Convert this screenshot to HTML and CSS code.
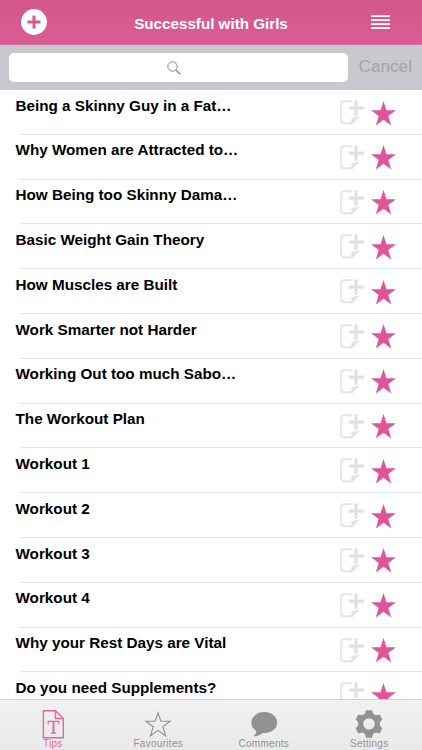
FILE: index.html
```
<!DOCTYPE html>
<html lang="en">
<head>
  <meta charset="UTF-8">
  <title>Successful with Girls</title>
  <meta name="viewport" content="width=device-width">
  <link rel="stylesheet" href="styles.css">
</head>
<body>
  <!-- shared row icons -->
  <svg class="sprite">
    <symbol id="note" viewBox="0 0 25 26">
      <path d="M12.5 1.2H4Q1.2 1.2 1.2 3.7V20.5Q1.2 23.2 4 23.2H12" fill="none" stroke="#e5e5eb" stroke-width="2"/>
      <path d="M19 16V17.4L12.2 24.4H11.4V18.6Q11.6 17.6 12.8 17.8Q16.5 18 19 16Z" fill="#e2e2e9"/>
      <path d="M16 1.8V14.4M10 8.1H22.8" fill="none" stroke="#e0e0e7" stroke-width="3.2" stroke-linecap="round"/>
    </symbol>
    <symbol id="star" viewBox="0 0 25 25">
      <path d="M12.5 0L15.4 9.3H25L17.3 15.1L20.2 24.5L12.5 18.8L4.8 24.5L7.7 15.1L0 9.3H9.6Z" fill="#e0559a"/>
    </symbol>
  </svg>

  <div class="app">
    <header class="navbar">
      <a href="#" class="add">
        <svg width="26" height="26" viewBox="0 0 26 26"><circle cx="13" cy="13" r="12.9" fill="#fff"/><path d="M13 6.5V19.5M6.5 13H19.5" stroke="#d5598f" stroke-width="3"/></svg>
      </a>
      <h1>Successful with Girls</h1>
      <a href="#" class="menu">
        <svg width="20" height="15" viewBox="0 0 20 15"><path d="M0 1.2H19M0 5.2H19M0 9.2H19M0 13.2H19" stroke="#fff" stroke-width="1.7"/></svg>
      </a>
    </header>

    <div class="search">
      <div class="field">
        <svg width="14" height="14" viewBox="0 0 14 14" fill="none" stroke="#888"><circle cx="5.5" cy="5.5" r="4.7"/><path d="M9 9L13.2 13.2" stroke-width="1.4"/></svg>
      </div>
      <a href="#" class="cancel">Cancel</a>
    </div>

    <ul class="tips">
      <li><span>Being a Skinny Guy in a Fat…</span><svg class="note"><use href="#note"/></svg><svg class="star"><use href="#star"/></svg></li>
      <li><span>Why Women are Attracted to…</span><svg class="note"><use href="#note"/></svg><svg class="star"><use href="#star"/></svg></li>
      <li><span>How Being too Skinny Dama…</span><svg class="note"><use href="#note"/></svg><svg class="star"><use href="#star"/></svg></li>
      <li><span>Basic Weight Gain Theory</span><svg class="note"><use href="#note"/></svg><svg class="star"><use href="#star"/></svg></li>
      <li><span>How Muscles are Built</span><svg class="note"><use href="#note"/></svg><svg class="star"><use href="#star"/></svg></li>
      <li><span>Work Smarter not Harder</span><svg class="note"><use href="#note"/></svg><svg class="star"><use href="#star"/></svg></li>
      <li><span>Working Out too much Sabo…</span><svg class="note"><use href="#note"/></svg><svg class="star"><use href="#star"/></svg></li>
      <li><span>The Workout Plan</span><svg class="note"><use href="#note"/></svg><svg class="star"><use href="#star"/></svg></li>
      <li><span>Workout 1</span><svg class="note"><use href="#note"/></svg><svg class="star"><use href="#star"/></svg></li>
      <li><span>Workout 2</span><svg class="note"><use href="#note"/></svg><svg class="star"><use href="#star"/></svg></li>
      <li><span>Workout 3</span><svg class="note"><use href="#note"/></svg><svg class="star"><use href="#star"/></svg></li>
      <li><span>Workout 4</span><svg class="note"><use href="#note"/></svg><svg class="star"><use href="#star"/></svg></li>
      <li><span>Why your Rest Days are Vital</span><svg class="note"><use href="#note"/></svg><svg class="star"><use href="#star"/></svg></li>
      <li><span>Do you need Supplements?</span><svg class="note"><use href="#note"/></svg><svg class="star"><use href="#star"/></svg></li>
    </ul>

    <nav class="tabbar">
      <a href="#" class="active">
        <svg width="30" height="30" viewBox="0 0 30 30" fill="none" stroke="#e2699f" stroke-width="1.4">
          <path d="M5.4 1.7H17.5L25.3 9.5V28.8H5.4ZM17.5 1.7V9.5H25.3"/>
          <path d="M10.2 15.2V12.4H20.8V15.2M12.8 24.2H18.2" stroke-width="1.2"/>
          <path d="M15.5 12.4V24" stroke-width="2"/>
        </svg>
        <span>Tips</span>
      </a>
      <a href="#">
        <svg width="30" height="30" viewBox="0 0 30 30" fill="none" stroke="#929292" stroke-width="1.1">
          <path d="M15 3.8L17.9 12.3H27.1L19.8 17.7L22.6 26.8L15 21.4L7.4 26.8L10.2 17.7L2.9 12.3H12.1Z"/>
        </svg>
        <span>Favourites</span>
      </a>
      <a href="#">
        <svg width="30" height="30" viewBox="0 0 30 30" fill="#929292">
          <path d="M15.3 3C8 3 2.3 7.7 2.3 13.6C2.3 17.2 4.3 20.2 7.4 22.1C7.2 24.3 6 25.9 4 27.2C8.3 27.6 11.5 26.3 13.8 24.1C22 24.7 28.2 20 28.2 13.6C28.2 7.7 22.5 3 15.3 3Z"/>
        </svg>
        <span>Comments</span>
      </a>
      <a href="#">
        <svg width="30" height="30" viewBox="0 0 30 30" fill="#929292">
          <path fill-rule="evenodd" d="M12 1.2H18L19 4.6Q20.3 5.9 22 6.2L25.6 5.5L28.4 10.5L26 13Q25.4 15 26 16.8L28.4 19.3L25.6 24.4L22 23.6Q20.3 24 19 25.2L18 28.7H12L11 25.2Q9.7 24 8 23.6L4.4 24.4L1.6 19.3L4 16.8Q4.6 15 4 13L1.6 10.5L4.4 5.5L8 6.2Q9.7 5.9 11 4.6ZM15 9.2A5.7 5.7 0 1 0 15 20.6A5.7 5.7 0 1 0 15 9.2Z"/>
        </svg>
        <span>Settings</span>
      </a>
    </nav>
  </div>
</body>
</html>
```
FILE: styles.css
```
* {
  box-sizing: border-box;
}

body {
  margin: 0;
  font-family: "Liberation Sans", Helvetica, Arial, sans-serif;
  background: #fff;
}

a {
  text-decoration: none;
}

svg {
  display: block;
}

.sprite {
  display: none;
}

.app {
  display: flex;
  flex-direction: column;
  height: 750px;
  overflow: hidden;
}

.navbar {
  display: grid;
  grid-template-columns: 60px 1fr 60px;
  align-items: center;
  flex: none;
  height: 45px;
  background: linear-gradient(#d3568b, #d95d95);
  border-bottom: 1px solid #cf6f9c;
}

.navbar h1 {
  margin: 3px 0 0;
  font-size: 15.2px;
  line-height: 20px;
  text-align: center;
  color: #fff;
}

.add {
  padding-left: 20.5px;
}

.menu {
  padding: 1px 0 0 9px;
}

.search {
  display: flex;
  flex: none;
  height: 45px;
  padding: 8px 9px 8px 8.5px;
  background: #c9c8cf;
}

.field {
  display: flex;
  align-items: center;
  justify-content: center;
  width: 339px;
  padding-right: 8px;
  border-radius: 5px;
  background: #fff;
}

.cancel {
  margin-left: 11px;
  font-size: 17.2px;
  line-height: 26px;
  color: #a3a3a9;
}

.tips {
  flex: 1;
  min-height: 0;
  overflow: hidden;
  margin: 0;
  padding: 0;
  list-style: none;
}

.tips li {
  display: flex;
  height: 44.8px;
  padding: 0 26px 0 15.5px;
  background: linear-gradient(#e4e4e6, #e4e4e6) 20px 100% / 100% 1px no-repeat;
}

.tips span {
  flex: 1;
  padding-top: 6.6px;
  font-size: 15.26px;
  line-height: 18px;
  font-weight: bold;
  color: #000;
}

.note {
  width: 25px;
  height: 26px;
  margin: 10px 6px 0 0;
}

.star {
  width: 25px;
  height: 25px;
  margin-top: 10.5px;
}

.tabbar {
  display: flex;
  flex: none;
  height: 51px;
  border-top: 1px solid #d0d0d0;
  background: linear-gradient(#f1f1f1, #e9e9e9);
}

.tabbar a {
  display: flex;
  flex: 1;
  flex-direction: column;
  align-items: center;
  padding-top: 9px;
  font-size: 10px;
  line-height: 12px;
  letter-spacing: 0.3px;
  color: #929292;
}

.tabbar span {
  margin-top: -1.5px;
}

.tabbar .active {
  color: #e2699f;
}
```
